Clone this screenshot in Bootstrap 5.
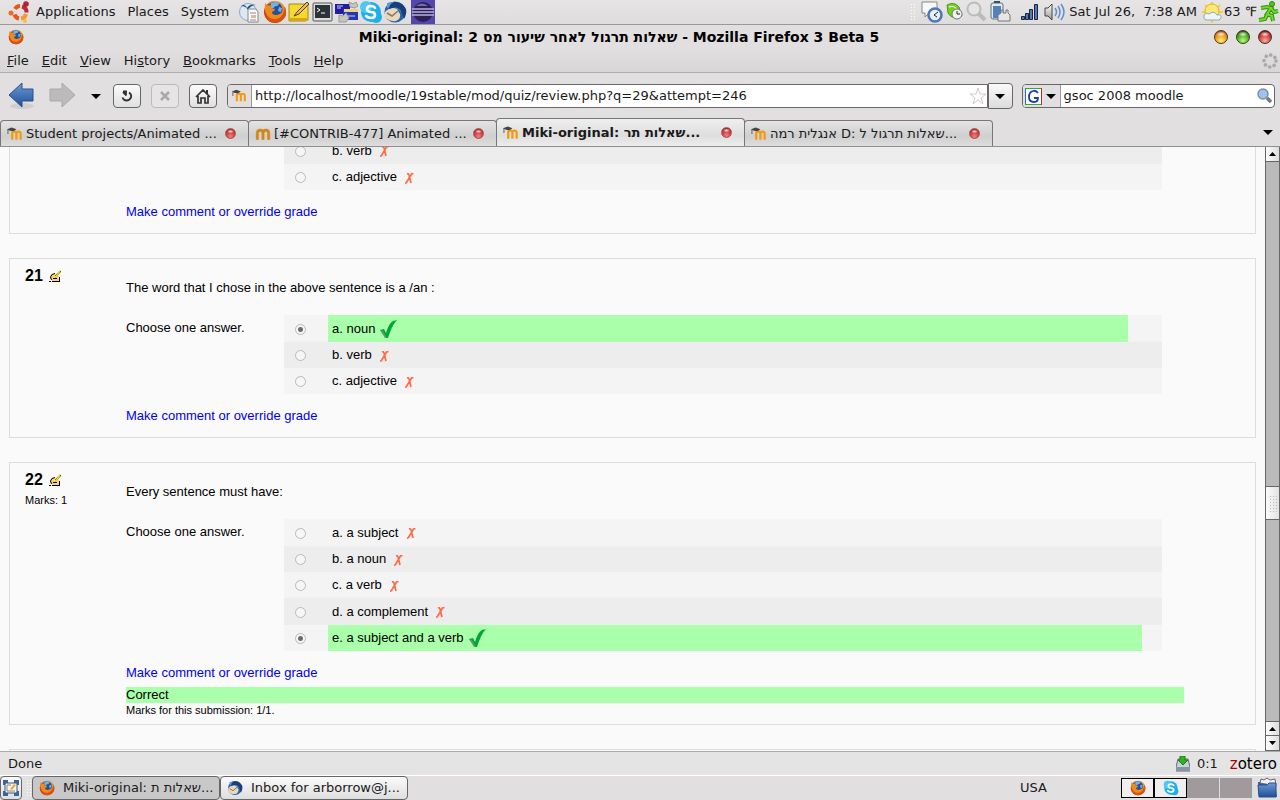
<!DOCTYPE html>
<html lang="en">
<head>
<meta charset="utf-8">
<meta name="viewport" content="width=device-width, initial-scale=1">
<title>Quiz review</title>
<link href="https://cdn.jsdelivr.net/npm/bootstrap@5.3.0/dist/css/bootstrap.min.css" rel="stylesheet">
<style>
body{font:13px/18px "DejaVu Sans",sans-serif;color:#1a1a1a;background:#e2dfe0;height:100vh;overflow:hidden}
svg{flex:none;display:block}
button{font:inherit;color:inherit;padding:0;border:0;background:none;white-space:nowrap}
input{font:inherit;color:inherit}
.panel-top,.titlebar,.menus,.toolbar,.tabs,.status,.taskbar{flex:none}
.panel-top{height:25px;border-bottom:1px solid #999;background:linear-gradient(#e6e4e5,#dfdcdd)}
.panel-apps{padding-left:8px;gap:0}
.panel-menus{gap:12px;margin:0 10px 0 6px}
.titlebar{height:24px;color:#000;font-size:14px}
.menus{height:24px;padding:0 7px;gap:13px;border-bottom:1px solid #aeacad;background:linear-gradient(#e2dfe0,#d8d6d7)}
.throbber{margin-right:-5px}
.toolbar{height:46px;padding:0 5px 0 8px;background:#e2dfe0}
.nav-fwd{margin:0 15px 0 14px}
.tool{width:28px;height:24px;border:1px solid #666;border-radius:4px;background:linear-gradient(#fbfbfb,#e0e0e0);display:flex;align-items:center;justify-content:center}
.tool:disabled{border-color:#bbb;background:#e6e4e5}
.tools{gap:10px;margin:0 10px 0 12px}
.field{height:24px;border:1px solid #6b6769;border-radius:4px;background:#fff;overflow:hidden}
.field input{border:0;outline:0;padding:0 3px;background:transparent;min-width:0}
.favicon-box{background:#e2dfe0;border-right:1px solid #999;height:22px}
.search{width:20%;margin-left:9px}
.engine{padding:0 4px 0 2px;gap:4px}
.drop{width:25px;height:26px;border:1px solid #6b6769;border-radius:0 4px 4px 0;background:linear-gradient(#fafafa,#dcdcdc)}
.tabs{height:28px;border-bottom:1px solid #8f8f8f;padding-right:7px}
.tab-item{flex:0 1 249px;height:26px;padding:0 12px 0 6px;margin-right:-1px;border:1px solid #777;border-bottom:0;border-radius:4px 4px 0 0;background:linear-gradient(#e4e4e4,#cfcfcf 60%,#dedede)}
.tab-item.current{height:28px;background:linear-gradient(#efefef,#dedede 60%,#ececec);font-weight:bold}
.tab-label{flex:1;text-align:left;padding-left:3px;overflow:hidden}
.dot,.orb{border-radius:50%;background:radial-gradient(ellipse 40% 22% at 50% 27%,rgba(255,255,255,.85),transparent),radial-gradient(circle at 50% 80%,var(--glow),var(--tone) 60%,var(--rim))}
.dot{width:11px;height:11px;border:1px solid #a55;--glow:#f08080;--tone:#c83232;--rim:#8d2020}
.orb{width:14px;height:14px;border:1px solid #432}
.orb-min{--glow:#fff06a;--tone:#e88a18;--rim:#7a2a10}
.orb-max{--glow:#b4ff78;--tone:#3f9f14;--rim:#123c08}
.orb-close{--glow:#ffa8a0;--tone:#c43030;--rim:#4a0c0c}
.viewport{min-height:0}
.page{background:#fafafa;color:#000;font-family:"Liberation Sans",Arial,sans-serif;padding:0 9px}
.question{border:1px solid #ddd;margin-bottom:24px;padding:20px 71px 11px 15px}
.question.scrolled{margin-top:-10px;padding-top:0;border-top:0}
.question.graded{padding-bottom:7px}
.q-info{width:101px;flex:none;margin-top:-12px}
.q-num{font-size:16px;line-height:18px;font-weight:bold;gap:6px}
.fine{font-size:11px;line-height:14px}
.q-text{margin-bottom:18px}
.choose{flex:0 0 158px;padding-top:4px}
.opts{border-collapse:collapse;width:83%}
.opts td{padding:0;vertical-align:middle}
.opts tr{height:26px;background:#f4f4f4}
.opts tr:nth-child(3n+1){height:27px}
.opts tr.alt{background:#ededed}
.opts td:first-child{width:44px;padding:1px 0 0 11px}
.opts td:nth-child(2){padding-left:4px}
.opts td:last-child{width:34px}
.opts.slim td:last-child{width:20px}
.opts .right,.feedback{background:#aaffaa}
.opts label{display:flex;align-items:center;gap:5px}
.opts .bad{margin:2px 0 0 3px}
.opts input{appearance:none;display:block;width:11px;height:11px;margin:0;border:1px solid #b9b9b9;border-radius:50%;background:#f6f6f6}
.opts input:checked{background:radial-gradient(#6b6b6b 0 2px,#f6f6f6 3px)}
.override{margin-top:13px;padding-bottom:1px;line-height:18px}
.override a{color:#00e;text-decoration:none}
.feedback{line-height:16px;margin-top:4px}
.scroller{width:15px;background:#bababa;border:1px solid #666;border-top:0;border-bottom:0;flex:none}
.scroller button{height:15px;flex:none;background:linear-gradient(90deg,#fff,#dcdcdc);border-bottom:1px solid #666;display:flex;align-items:center;justify-content:center}
.scroller .line-up{border-top:1px solid #666}
.track-a{flex:325}
.track-b{flex:201}
.thumb{height:34px;flex:none;border:solid #666;border-width:1px 0;background:radial-gradient(circle,#bbb 1px,transparent 1px) 1px 1px/3px 3px content-box,linear-gradient(90deg,#fafafa,#e2e2e2);padding:7px 2px}
.status{height:25px;border-top:1px solid #aaa;border-bottom:1px solid #fff;background:#e4e4e4;padding:0 3px 0 8px}
.sync{margin:0 12px 0 7px}
.zotero{font-size:15px;color:#000}
.zotero span{color:#a00}
.taskbar{height:24px}
.task{height:24px;width:188px;border:1px solid #666;border-radius:4px;background:linear-gradient(#fafafa,#dedede);padding:0 6px;gap:8px}
.task.pressed{background:#c8c8c8}
.task.show-desk{width:22px;padding:0}
.grip{width:6px;height:18px;background:radial-gradient(circle,#fff 1px,transparent 1px) 0 0/3px 3px;flex:none}
.layout-name{margin-right:74px}
.desk{width:33px;height:20px;background:#a09a9d;border-right:1px solid #ddd}
.desk.used{background:#f0eeee;border:1px solid #000}
.trash{margin:0 2px 0 4px}
</style>
</head>
<body class="d-flex flex-column">
<svg class="position-absolute" width="0" height="0" aria-hidden="true">
<defs>
<radialGradient id="gFire" cx=".6" cy=".3"><stop offset="0" stop-color="#ffd43a"/><stop offset=".6" stop-color="#f08a1c"/><stop offset="1" stop-color="#cf3c0c"/></radialGradient>
<linearGradient id="gBlue" x2="0" y2="1"><stop stop-color="#6d9ad6"/><stop offset="1" stop-color="#1f4f94"/></linearGradient>
<linearGradient id="gSteel" x2="0" y2="1"><stop stop-color="#fff"/><stop offset="1" stop-color="#999"/></linearGradient>
<symbol id="firefox" viewBox="0 0 24 24"><circle cx="12" cy="12" r="11" fill="url(#gFire)"/><circle cx="12" cy="9.500" r="7.500" fill="#24509c"/><path d="M8 3q5-2 8 0-1 4-4 3-1 3-4 2zM16 7l3 1-1 4-3-1z" fill="#6fb3e8"/><path d="M2 3l3 3q2-1 4-1-2 2-1 3l4 1q0 2-3 3 0 3 4 3 4 0 7-4 1 7-6 9Q5 21 3 14 1 9 2 3z" fill="#f08a1c"/><path d="M3 13q3 7 10 6 6-1 8-8l1-4q4 11-6 15Q6 25 3 16z" fill="#d9520f"/></symbol>
<symbol id="bird" viewBox="0 0 24 24"><circle cx="12" cy="12" r="10.500" fill="#2a62ad"/><path d="M4 3q10-3 16 4l-2 5Q12 5 4 8z" fill="#5e98d6"/><path d="M2 12q6-6 12-3l3 5q1 5-4 7Q5 22 2 16z" fill="#e9d9b8"/><path d="M4 13l5 3 6-5" fill="none" stroke="#876" stroke-width="1.500"/><path d="M6 9q8-4 12 2l3 8q3-5 2-10Q19 1 11 2 6 4 6 9z" fill="#173f7d"/></symbol>
<symbol id="skype" viewBox="0 0 24 24"><circle cx="12" cy="12" r="10" fill="#1cb0ea"/><circle cx="7" cy="7" r="6" fill="#4cc8f5"/><circle cx="17" cy="17" r="6" fill="#1cb0ea"/><path d="M16 8q-1-2-4-2-4 0-4 3t4 3q4 0 4 3t-4 3q-3 0-5-2" fill="none" stroke="#fff" stroke-width="2.600" stroke-linecap="round"/></symbol>
<symbol id="moodle" viewBox="0 0 17 14"><path d="M5.500 13V6q0-1.500 2.300-1.500T10 6.500V13M10 7q0-2.500 2.300-2.500T14.500 7v6" fill="none" stroke="#f59a10" stroke-width="2.400"/><path d="M0 2l5-2 5 2-3 2-4-.5z" fill="#444"/><path d="M1 2v5" stroke="#555"/></symbol>
<symbol id="em" viewBox="0 0 17 14"><path d="M2.500 13V6q0-3 3-3t3 3v7M8.500 6q0-3 3-3t3 3v7" fill="none" stroke="#f0a898" stroke-width="3.600"/><path d="M2.500 13V6q0-3 3-3t3 3v7M8.500 6q0-3 3-3t3 3v7" fill="none" stroke="#c88a12" stroke-width="2.500"/></symbol>
<symbol id="tick" viewBox="0 0 17 18"><path d="M0 10l4-1 2 4Q9 3 13 1l4-1Q12 5 8 18H6z" fill="#00a638"/><path d="M0 10l3 1 4 7H5z" fill="#5a9a6a"/></symbol>
<symbol id="cross" viewBox="0 0 9 11"><path d="M2 1q2-1 2.500 3L6 10M8.500.5L6.500 1 1.500 9.500 0 10.500" fill="none" stroke="#ff6a45" stroke-width="1.700"/></symbol>
<symbol id="hand" viewBox="0 0 12 12"><path d="M2 4h5l4 3v4H3L1 8z" fill="#fc9"/><path d="M0 11.500h2M2.500 10L1.500 7 3 4.500 6 3.500M3 11.500h8M10.500 7v4M4 8.500h4" stroke="#000" fill="none"/><path d="M6 7l5.500-6" stroke="#000" stroke-width="1.600"/><path d="M3 6.500h4L11 1" stroke="#ee0" stroke-width="1.300" fill="none"/></symbol>
<symbol id="caret" viewBox="0 0 10 5"><path d="M0 0h10L5 5z" fill="#000"/></symbol>
</defs>
</svg>

<header class="panel-top d-flex align-items-center justify-content-between">
<nav class="panel-apps d-flex align-items-center">
<svg width="22" height="22" viewBox="0 0 22 22"><g fill="none" stroke-width="4"><path d="M7 8a6 6 0 0 1 5-3" stroke="#e6581c"/><path d="M14 5.500a6 6 0 0 1 4.500 6" stroke="#b92c38"/><path d="M18 13a6 6 0 0 1-5 4.500" stroke="#ef9b2d"/><path d="M11 17.500a6 6 0 0 1-4.500-4" stroke="#e6581c"/></g><circle cx="3" cy="12" r="2.500" fill="#ef6a2b"/><circle cx="18" cy="3" r="2.800" fill="#b81f35"/><circle cx="17" cy="20" r="2" fill="#f8bd45"/></svg>
<div class="panel-menus d-flex"><button>Applications</button><button>Places</button><button>System</button></div>
<svg class="me-1" width="20" height="24" viewBox="0 0 20 24"><circle cx="9" cy="12" r="8.500" fill="#dce8f3" stroke="#8aa9c8"/><path d="M2 6q4-3 6 2 3-5 9-3-5 0-8 5-2-4-7-4z" fill="#234e85"/><path d="M9 9h8l2 3v10H9z" fill="#f8f8f8" stroke="#888"/><path d="M11 13h6M11 20h6" stroke="#88a"/><path d="M12 15h5v3h-5z" fill="#db9"/></svg>
<svg width="24" height="24"><use href="#firefox"/></svg>
<svg width="24" height="24" viewBox="0 0 24 24"><path d="M2 4h19v16l-3 1H2z" fill="#f6d92e" stroke="#aa8a00"/><path d="M2 18h19v3H2z" fill="#d8a80f"/><path d="M7 16l3-4L20 2l2 2-10 10z" fill="#eebc44" stroke="#553d10"/></svg>
<svg width="24" height="24" viewBox="0 0 24 24"><rect x="2" y="3" width="19" height="18" rx="1" fill="#ddd" stroke="#555"/><rect x="4" y="5" width="15" height="13" fill="#2c3338"/><path d="M6 8l3 2-3 2M10 13h4" stroke="#fff" fill="none"/></svg>
<svg width="24" height="24" viewBox="0 0 24 24"><path d="M0 4h15v10H0z" fill="#1c1fa5"/><path d="M8 9h15v11H8z" fill="#2636b4"/><path d="M2 6h6M2 8h4M11 16h9" stroke="#dce"/><path d="M9 9h14v3H9z" fill="#ecd47d"/><path d="M14 2l4 2 3-2 2 4-3 2-5-1zM4 15l4 1 3-3 3 5-3 4H4z" fill="#c8c5be" stroke="#999"/></svg>
<svg width="24" height="24"><use href="#skype"/></svg><svg width="24" height="24"><use href="#bird"/></svg>
<svg class="ms-1" width="24" height="24" viewBox="0 0 24 24"><path d="M0 0h24v24H0z" fill="#5347ad"/><circle cx="12" cy="12" r="10" fill="#2c2055"/><path d="M5 6q6-5 12 0z" fill="#766bb4"/><path d="M1 9h22M1 12h22M1 15h22" stroke="#b8b2df" stroke-width="1.300"/></svg>
</nav>
<div class="d-flex align-items-center">
<span class="grip me-1"></span>
<svg width="24" height="24" viewBox="0 0 24 24"><path d="M2 2h15v11H9l-4 4v-4H2z" fill="#f8f8f8" stroke="#888"/><circle cx="15" cy="15" r="6.500" fill="#e8f0fa" stroke="#4a78b4" stroke-width="2.500"/><path d="M18 12l-4 3 3 2" stroke="#222" fill="none"/></svg>
<svg width="22" height="24" viewBox="-1 0 22 24"><path d="M2 5q7-4 12 2l3 9q-9 5-14-3z" fill="#73d21f" stroke="#4b9b10"/><path d="M4 7q6-2 8 3" stroke="#fff" fill="none"/><circle cx="12" cy="14" r="5" fill="#f3f3f3" stroke="#777"/><path d="M12 11v3h3" stroke="#222" fill="none"/></svg>
<svg width="22" height="24" viewBox="0 0 22 24"><circle cx="8" cy="9" r="6.500" fill="#e5e5e5" stroke="#bbb" stroke-width="2"/><path d="M13 14l6 6" stroke="#bbb" stroke-width="4"/></svg>
<svg width="24" height="24" viewBox="0 0 24 24"><rect x="3" y="3" width="12" height="16" rx="2" fill="#e5e8ec" stroke="#577"/><rect x="5" y="6" width="8" height="12" fill="#5381bd"/><path d="M6 2h6" stroke="#356" stroke-width="2"/><path d="M10 21v-6l3-2v-3h2v3h3v-3h2v3l2 2v6z" fill="#e6e6e6" stroke="#777"/></svg>
<svg class="ms-2" width="19" height="24" viewBox="0 0 19 24"><g fill="#4b7dc0" stroke="#223"><path d="M1.500 16.500h3v3h-3zM5.500 13.500h3v6h-3zM9.500 9.500h3v10h-3zM14.500 4.500h3v15h-3z"/></g></svg>
<svg class="mx-1" width="22" height="24" viewBox="0 0 22 24"><path d="M2 8h3l4-4v16l-4-4H2z" fill="url(#gSteel)" stroke="#444"/><path d="M12 8q3 4 0 8M15 6q4 6 0 12M18 4q6 8 0 16" stroke="#5c8fd1" stroke-width="1.500" fill="none"/></svg>
<time style="white-space:pre">Sat Jul 26,  7:38 AM</time>
<svg class="ms-1" width="23" height="23" viewBox="0 0 23 23"><path d="M11 1v21M1 11h21M4 4l15 15M19 4L4 19" stroke="#f7ce43" stroke-width="2"/><circle cx="11" cy="10" r="7" fill="#ffe875" stroke="#e2b11e"/><path d="M3 14q2-3 5-1 5-4 8 1 5-1 4 3-1 3-6 2H5q-3-1-2-5z" fill="#eef5f8" stroke="#8ab"/></svg>
<span>63 ℉</span>
<svg width="23" height="24" viewBox="0 0 23 24"><circle cx="15" cy="4" r="2.500" fill="#53c51e" stroke="#2e8a08"/><path d="M4 8l6-1 4 1-4 6 5 2 1 5M11 13l-3 6-6 1M14 8l3 4 4-1" fill="none" stroke="#318d09" stroke-width="4"/><path d="M4 8l6-1 4 1-4 6 5 2 1 5M11 13l-3 6-6 1M14 8l3 4 4-1" fill="none" stroke="#6edb2b" stroke-width="2"/></svg>
</div>
</header>

<div class="titlebar d-flex align-items-center px-1">
<svg class="ms-1" width="16" height="16"><use href="#firefox"/></svg>
<strong class="flex-fill text-center">Miki-original: שאלות תרגול לאחר שיעור מס 2 - Mozilla Firefox 3 Beta 5</strong>
<div class="d-flex gap-2 pe-1"><button class="orb orb-min" aria-label="Minimize"></button><button class="orb orb-max" aria-label="Maximize"></button><button class="orb orb-close" aria-label="Close"></button></div>
</div>
<nav class="menus d-flex align-items-center">
<button><u>F</u>ile</button><button><u>E</u>dit</button><button><u>V</u>iew</button><button>Hi<u>s</u>tory</button><button><u>B</u>ookmarks</button><button><u>T</u>ools</button><button><u>H</u>elp</button>
<svg class="throbber ms-auto" width="16" height="16" viewBox="0 0 16 16"><circle cx="8" cy="8" r="6" fill="none" stroke="#aaa8a9" stroke-width="3.600" stroke-linecap="round" stroke-dasharray="0.100 4.612"/></svg>
</nav>

<div class="toolbar d-flex align-items-center">
<button aria-label="Back"><svg width="27" height="28" viewBox="0 0 27 28"><ellipse cx="14" cy="24" rx="12" ry="3" fill="#cfcdd0"/><path d="M1 13L14 1v6h11v12H14v6z" fill="url(#gBlue)" stroke="#28508c"/></svg></button>
<button class="nav-fwd" aria-label="Forward"><svg width="27" height="28" viewBox="0 0 27 28"><path d="M26 13L13 1v6H1v12h12v6z" fill="#bcbabb" stroke="#aaa"/></svg></button>
<button aria-label="Recent pages"><svg width="10" height="5"><use href="#caret"/></svg></button>
<div class="tools d-flex">
<button class="tool" aria-label="Reload"><svg width="14" height="14" viewBox="0 0 14 14"><path d="M9 3.500q3 2 2 5-1.500 3-4.500 3t-4-3" fill="none" stroke="#333" stroke-width="1.800"/><path d="M3 2.500h4M6 2v5M6.500 6.500L3 3" fill="none" stroke="#333" stroke-width="1.800"/></svg></button>
<button class="tool" aria-label="Stop" disabled><svg width="12" height="12" viewBox="0 0 12 12"><path d="M2 2l8 8M10 2l-8 8" stroke="#aaa" stroke-width="2.600"/></svg></button>
<button class="tool" aria-label="Home"><svg width="16" height="15" viewBox="0 0 16 15"><path d="M1 8l7-7 7 7M3 7v7h3V9h4v5h3V7" fill="none" stroke="#333" stroke-width="1.700"/><path d="M12 1v4" stroke="#333" stroke-width="2"/></svg></button>
</div>
<div class="field d-flex align-items-center flex-fill rounded-end-0">
<span class="favicon-box d-flex align-items-center px-1"><svg width="15" height="14"><use href="#moodle"/></svg></span>
<input class="flex-fill" type="text" aria-label="Address" value="http://localhost/moodle/19stable/mod/quiz/review.php?q=29&amp;attempt=246">
<svg width="18" height="18" viewBox="0 0 18 18"><path d="M9 1l2 6h6l-5 4 2 6-5-4-5 4 2-6-5-4h6z" fill="#fff" stroke="#ccc"/></svg>
</div>
<button class="drop d-flex align-items-center justify-content-center" aria-label="Show history"><svg width="10" height="5"><use href="#caret"/></svg></button>
<div class="field search d-flex align-items-center">
<button class="favicon-box engine d-flex align-items-center" aria-label="Search engine"><svg width="17" height="17" viewBox="0 0 17 17"><path d="M0 0h17v17H0z" fill="#fff"/><path d="M.5 17V.5" stroke="#36c"/><path d="M0 .5h17M0 16.500h17" stroke="#3a3"/><path d="M16.500 0v17" stroke="#c22"/><path d="M13 5q-2-3-5-2-4 1-4 6 0 5 5 5 4 0 4-4H9" fill="none" stroke="#1a3fb0" stroke-width="1.800"/></svg><svg width="10" height="5"><use href="#caret"/></svg></button>
<input class="flex-fill" type="text" aria-label="Search" value="gsoc 2008 moodle">
<svg width="18" height="18" viewBox="0 0 18 18"><circle cx="7" cy="7" r="5" fill="#9cc4ef" stroke="#7f8e9f" stroke-width="1.500"/><path d="M11 11l4 4" stroke="#777" stroke-width="3.500"/></svg>
</div>
</div>

<div class="tabs d-flex align-items-end">
<button class="tab-item d-flex align-items-center"><svg width="16" height="14"><use href="#moodle"/></svg><span class="tab-label">Student projects/Animated ...</span><i class="dot"></i></button>
<button class="tab-item d-flex align-items-center"><svg width="16" height="14"><use href="#em"/></svg><span class="tab-label">[#CONTRIB-477] Animated ...</span><i class="dot"></i></button>
<button class="tab-item current d-flex align-items-center"><svg width="16" height="14"><use href="#moodle"/></svg><span class="tab-label">Miki-original: שאלות תר...</span><i class="dot"></i></button>
<button class="tab-item d-flex align-items-center"><svg width="16" height="14"><use href="#moodle"/></svg><span class="tab-label">אנגלית רמה D: שאלות תרגול ל...</span><i class="dot"></i></button>
<button class="ms-auto align-self-center" aria-label="All tabs"><svg width="10" height="5"><use href="#caret"/></svg></button>
</div>

<div class="viewport d-flex flex-fill overflow-hidden">
<main class="page flex-fill overflow-hidden">
<section class="question scrolled d-flex">
<div class="q-info"></div>
<div class="flex-fill">
<div class="d-flex"><div class="choose"></div>
<table class="opts">
<tr class="alt"><td><input type="radio" name="q20" id="q20b" disabled></td><td><label for="q20b">b. verb <svg class="bad" width="9" height="11"><use href="#cross"/></svg></label></td><td></td></tr>
<tr><td><input type="radio" name="q20" id="q20c" disabled></td><td><label for="q20c">c. adjective <svg class="bad" width="9" height="11"><use href="#cross"/></svg></label></td><td></td></tr>
</table></div>
<div class="override"><a href="#">Make comment or override grade</a></div>
</div>
</section>

<section class="question d-flex">
<div class="q-info"><div class="q-num d-flex align-items-center">21 <svg width="12" height="12"><use href="#hand"/></svg></div></div>
<div class="flex-fill">
<div class="q-text">The word that I chose in the above sentence is a /an :</div>
<div class="d-flex"><div class="choose">Choose one answer.</div>
<table class="opts">
<tr><td><input type="radio" name="q21" id="q21a" checked disabled></td><td class="right"><label for="q21a">a. noun <svg width="17" height="18"><use href="#tick"/></svg></label></td><td></td></tr>
<tr class="alt"><td><input type="radio" name="q21" id="q21b" disabled></td><td><label for="q21b">b. verb <svg class="bad" width="9" height="11"><use href="#cross"/></svg></label></td><td></td></tr>
<tr><td><input type="radio" name="q21" id="q21c" disabled></td><td><label for="q21c">c. adjective <svg class="bad" width="9" height="11"><use href="#cross"/></svg></label></td><td></td></tr>
</table></div>
<div class="override"><a href="#">Make comment or override grade</a></div>
</div>
</section>

<section class="question graded d-flex">
<div class="q-info"><div class="q-num d-flex align-items-center">22 <svg width="12" height="12"><use href="#hand"/></svg></div><div class="fine mt-1">Marks: 1</div></div>
<div class="flex-fill">
<div class="q-text">Every sentence must have:</div>
<div class="d-flex"><div class="choose">Choose one answer.</div>
<table class="opts slim">
<tr><td><input type="radio" name="q22" id="q22a" disabled></td><td><label for="q22a">a. a subject <svg class="bad" width="9" height="11"><use href="#cross"/></svg></label></td><td></td></tr>
<tr class="alt"><td><input type="radio" name="q22" id="q22b" disabled></td><td><label for="q22b">b. a noun <svg class="bad" width="9" height="11"><use href="#cross"/></svg></label></td><td></td></tr>
<tr><td><input type="radio" name="q22" id="q22c" disabled></td><td><label for="q22c">c. a verb <svg class="bad" width="9" height="11"><use href="#cross"/></svg></label></td><td></td></tr>
<tr class="alt"><td><input type="radio" name="q22" id="q22d" disabled></td><td><label for="q22d">d. a complement <svg class="bad" width="9" height="11"><use href="#cross"/></svg></label></td><td></td></tr>
<tr><td><input type="radio" name="q22" id="q22e" checked disabled></td><td class="right"><label for="q22e">e. a subject and a verb <svg width="17" height="18"><use href="#tick"/></svg></label></td><td></td></tr>
</table></div>
<div class="override"><a href="#">Make comment or override grade</a></div>
<div class="feedback">Correct</div>
<div class="fine">Marks for this submission: 1/1.</div>
</div>
</section>
<section class="question"></section>
</main>
<div class="scroller d-flex flex-column">
<button aria-label="Scroll up"><svg width="7" height="4" viewBox="0 0 7 4"><path d="M0 4h7L3.500 0z"/></svg></button>
<div class="track-a"></div><div class="thumb"></div><div class="track-b"></div>
<button class="line-up" aria-label="Scroll up"><svg width="7" height="4" viewBox="0 0 7 4"><path d="M0 4h7L3.500 0z"/></svg></button>
<button aria-label="Scroll down"><svg width="7" height="4" viewBox="0 0 7 4"><path d="M0 0h7L3.500 4z"/></svg></button>
</div>
</div>

<div class="status d-flex align-items-center">
<span class="me-auto">Done</span>
<svg width="14" height="16" viewBox="0 0 14 16"><path d="M2 3h10l2 8v4H0v-4z" fill="#c8d0d8" stroke="#667"/><path d="M0 11h14v4H0z" fill="#8994a2"/><path d="M4 0h5v4h3L7 9 2 4h2z" fill="#2eb51c" stroke="#178010"/></svg>
<span class="sync">0:1</span><span class="zotero"><span>z</span>otero</span>
</div>
<footer class="taskbar d-flex align-items-center">
<button class="task show-desk d-flex align-items-center justify-content-center" aria-label="Show desktop"><svg width="16" height="16" viewBox="0 0 16 16"><path d="M0 0h5v5H0zM11 0h5v5h-5zM0 11h5v5H0zM11 11h5v5h-5z" fill="#3468a5"/><rect x="2" y="3" width="12" height="10" rx="1" fill="#f5f5f0" stroke="#456"/><path d="M7 9l4-5 2 1-4 5z" fill="#ea3"/><path d="M8 5H4v6h8" fill="none" stroke="#888"/></svg></button>
<span class="grip ms-1"></span>
<button class="task pressed d-flex align-items-center"><svg width="16" height="16"><use href="#firefox"/></svg>Miki-original: שאלות ת...</button>
<button class="task d-flex align-items-center"><svg width="16" height="16"><use href="#bird"/></svg>Inbox for arborrow@j...</button>
<span class="layout-name ms-auto">USA</span>
<div class="d-flex">
<button class="desk used d-flex align-items-center justify-content-center" aria-label="Workspace 1"><svg width="16" height="16"><use href="#firefox"/></svg></button><button class="desk used d-flex align-items-center justify-content-center" aria-label="Workspace 2"><svg width="16" height="16"><use href="#skype"/></svg></button><button class="desk" aria-label="Workspace 3"></button><button class="desk" aria-label="Workspace 4"></button>
</div>
<svg class="trash" width="21" height="22" viewBox="0 0 21 22"><path d="M1 5h17l2 15H2z" fill="#345f98"/><path d="M3 6l1-4 3 1 3-2 3 2 5-1 1 7z" fill="#f2f2f2" stroke="#667"/><path d="M1 8h9l2-2h7v14H2z" fill="url(#gBlue)" stroke="#28508c"/></svg>
</footer>
<script src="https://cdn.jsdelivr.net/npm/bootstrap@5.3.0/dist/js/bootstrap.bundle.min.js"></script>
</body>
</html>
